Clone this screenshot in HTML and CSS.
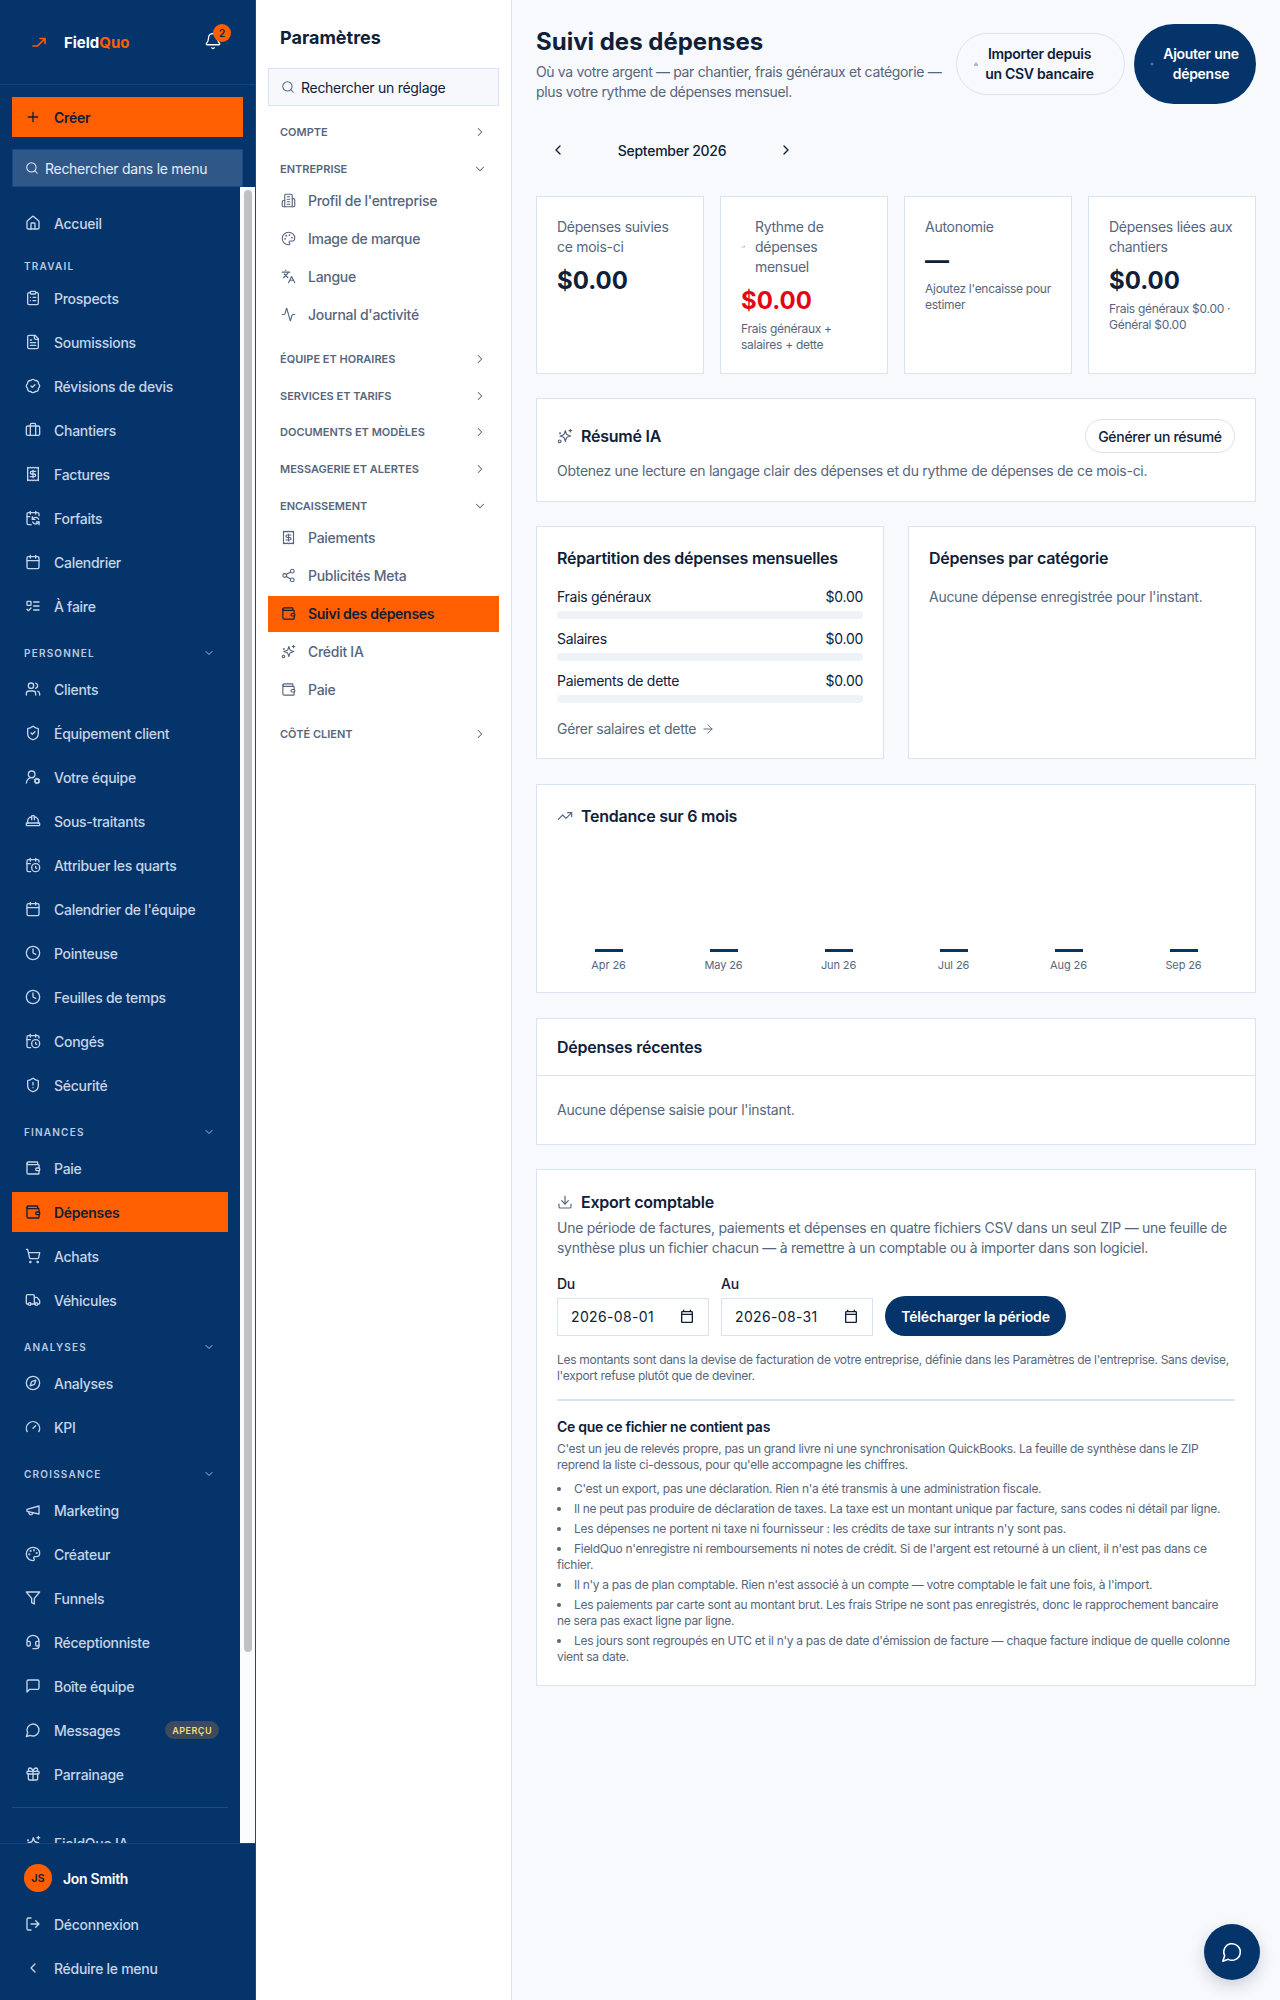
FILE: index.html
```html
<!DOCTYPE html>
<html lang="fr">
<head>
<meta charset="utf-8">
<title>Suivi des dépenses</title>
<link rel="stylesheet" href="styles.css">
</head>
<body>
<svg class="sprite" aria-hidden="true">
<symbol id="house" viewBox="0 0 24 24"><path d="M15 21v-8a1 1 0 0 0-1-1h-4a1 1 0 0 0-1 1v8"/><path d="M3 10a2 2 0 0 1 .709-1.528l7-5.999a2 2 0 0 1 2.582 0l7 5.999A2 2 0 0 1 21 10v9a2 2 0 0 1-2 2H5a2 2 0 0 1-2-2z"/></symbol>
<symbol id="clip" viewBox="0 0 24 24"><rect x="8" y="2" width="8" height="4" rx="1"/><path d="M16 4h2a2 2 0 0 1 2 2v14a2 2 0 0 1-2 2H6a2 2 0 0 1-2-2V6a2 2 0 0 1 2-2h2"/><path d="M12 11h4M12 16h4M8 11h.01M8 16h.01"/></symbol>
<symbol id="file" viewBox="0 0 24 24"><path d="M15 2H6a2 2 0 0 0-2 2v16a2 2 0 0 0 2 2h12a2 2 0 0 0 2-2V7Z"/><path d="M14 2v4a2 2 0 0 0 2 2h4"/><path d="M10 9H8M16 13H8M16 17H8"/></symbol>
<symbol id="badge" viewBox="0 0 24 24"><path d="M3.85 8.62a4 4 0 0 1 4.78-4.77 4 4 0 0 1 6.74 0 4 4 0 0 1 4.78 4.78 4 4 0 0 1 0 6.74 4 4 0 0 1-4.77 4.78 4 4 0 0 1-6.75 0 4 4 0 0 1-4.78-4.77 4 4 0 0 1 0-6.76Z"/><path d="m9 12 2 2 4-4"/></symbol>
<symbol id="brief" viewBox="0 0 24 24"><path d="M16 20V4a2 2 0 0 0-2-2h-4a2 2 0 0 0-2 2v16"/><rect x="2" y="6" width="20" height="14" rx="2"/></symbol>
<symbol id="receipt" viewBox="0 0 24 24"><path d="M4 2v20l2-1 2 1 2-1 2 1 2-1 2 1 2-1 2 1V2l-2 1-2-1-2 1-2-1-2 1-2-1-2 1Z"/><path d="M16 8h-6a2 2 0 1 0 0 4h4a2 2 0 1 1 0 4H8"/><path d="M12 17.5v-11"/></symbol>
<symbol id="calsync" viewBox="0 0 24 24"><path d="M11 10v4h4"/><path d="m11 14 1.535-1.605a5 5 0 0 1 8 1.5"/><path d="M16 2v4"/><path d="m21 18-1.535 1.605a5 5 0 0 1-8-1.5"/><path d="M21 22v-4h-4"/><path d="M21 8.5V6a2 2 0 0 0-2-2H5a2 2 0 0 0-2 2v14a2 2 0 0 0 2 2h4.3"/><path d="M3 10h4"/><path d="M8 2v4"/></symbol>
<symbol id="cal" viewBox="0 0 24 24"><path d="M8 2v4M16 2v4"/><rect x="3" y="4" width="18" height="18" rx="2"/><path d="M3 10h18"/></symbol>
<symbol id="calnative" viewBox="0 0 24 24"><path d="M19 3h-1V1h-2v2H8V1H6v2H5c-1.11 0-2 .9-2 2v14c0 1.1.89 2 2 2h14c1.1 0 2-.9 2-2V5c0-1.1-.9-2-2-2zm0 16H5V9h14v10zm0-12H5V5h14v2z"/></symbol>
<symbol id="todo" viewBox="0 0 24 24"><rect x="3" y="5" width="6" height="6" rx="1"/><path d="m3 17 2 2 4-4M13 6h8M13 12h8M13 18h8"/></symbol>
<symbol id="users" viewBox="0 0 24 24"><path d="M16 21v-2a4 4 0 0 0-4-4H6a4 4 0 0 0-4 4v2"/><circle cx="9" cy="7" r="4"/><path d="M22 21v-2a4 4 0 0 0-3-3.87M16 3.13a4 4 0 0 1 0 7.75"/></symbol>
<symbol id="shcheck" viewBox="0 0 24 24"><path d="M20 13c0 5-3.5 7.5-7.66 8.95a1 1 0 0 1-.67-.01C7.5 20.5 4 18 4 13V6a1 1 0 0 1 1-1c2 0 4.5-1.2 6.24-2.72a1.17 1.17 0 0 1 1.52 0C14.51 3.81 17 5 19 5a1 1 0 0 1 1 1z"/><path d="m9 12 2 2 4-4"/></symbol>
<symbol id="usercog" viewBox="0 0 24 24"><path d="M2 21a8 8 0 0 1 10.434-7.62"/><circle cx="10" cy="8" r="5"/><circle cx="18" cy="18" r="3"/><path d="m19.5 14.3-.4.9m-2.2 5.6-.4.9m5.2-2.2-.9-.4m-5.6-2.6-.9-.4m7.4 0-.9.4m-5.6 2.2-.9.4m5.2 2.2-.4-.9m-2.2-5.6-.4-.9"/></symbol>
<symbol id="hat" viewBox="0 0 24 24"><path d="M10 10V5a1 1 0 0 1 1-1h2a1 1 0 0 1 1 1v5"/><path d="M14 6a6 6 0 0 1 6 6v3"/><path d="M4 15v-3a6 6 0 0 1 6-6"/><rect x="2" y="15" width="20" height="4" rx="1"/></symbol>
<symbol id="calclock" viewBox="0 0 24 24"><path d="M16 14v2.2l1.6 1"/><path d="M16 2v4"/><path d="M21 7.5V6a2 2 0 0 0-2-2H5a2 2 0 0 0-2 2v14a2 2 0 0 0 2 2h3.5"/><path d="M3 10h5"/><path d="M8 2v4"/><circle cx="16" cy="16" r="6"/></symbol>
<symbol id="clock" viewBox="0 0 24 24"><circle cx="12" cy="12" r="10"/><path d="M12 6v6l4 2"/></symbol>
<symbol id="shalert" viewBox="0 0 24 24"><path d="M20 13c0 5-3.5 7.5-7.66 8.95a1 1 0 0 1-.67-.01C7.5 20.5 4 18 4 13V6a1 1 0 0 1 1-1c2 0 4.5-1.2 6.24-2.72a1.17 1.17 0 0 1 1.52 0C14.51 3.81 17 5 19 5a1 1 0 0 1 1 1z"/><path d="M12 8v4M12 16h.01"/></symbol>
<symbol id="wallet" viewBox="0 0 24 24"><path d="M19 7V4a1 1 0 0 0-1-1H5a2 2 0 0 0 0 4h15a1 1 0 0 1 1 1v4h-3a2 2 0 0 0 0 4h3a1 1 0 0 0 1-1v-2a1 1 0 0 0-1-1"/><path d="M3 5v14a2 2 0 0 0 2 2h15a1 1 0 0 0 1-1v-4"/></symbol>
<symbol id="cart" viewBox="0 0 24 24"><circle cx="8" cy="21" r="1"/><circle cx="19" cy="21" r="1"/><path d="M2.05 2.05h2l2.66 12.42a2 2 0 0 0 2 1.58h9.78a2 2 0 0 0 1.95-1.57l1.65-7.43H5.12"/></symbol>
<symbol id="truck" viewBox="0 0 24 24"><path d="M14 18V6a2 2 0 0 0-2-2H4a2 2 0 0 0-2 2v11a1 1 0 0 0 1 1h2"/><path d="M15 18H9"/><path d="M19 18h2a1 1 0 0 0 1-1v-3.65a1 1 0 0 0-.22-.624l-3.48-4.35A1 1 0 0 0 17.52 8H14"/><circle cx="17" cy="18" r="2"/><circle cx="7" cy="18" r="2"/></symbol>
<symbol id="compass" viewBox="0 0 24 24"><circle cx="12" cy="12" r="10"/><path d="m16.24 7.76-1.804 5.411a2 2 0 0 1-1.265 1.265L7.76 16.24l1.804-5.411a2 2 0 0 1 1.265-1.265z"/></symbol>
<symbol id="gauge" viewBox="0 0 24 24"><path d="m12 14 4-4"/><path d="M3.34 19a10 10 0 1 1 17.32 0"/></symbol>
<symbol id="mega" viewBox="0 0 24 24"><path d="m3 11 18-5v12L3 14v-3z"/><path d="M11.6 16.8a3 3 0 1 1-5.8-1.6"/></symbol>
<symbol id="palette" viewBox="0 0 24 24"><path d="M12 22a1 1 0 0 1 0-20 10 9 0 0 1 10 9 5 5 0 0 1-5 5h-2.25a1.75 1.75 0 0 0-1.4 2.8l.3.4a1.75 1.75 0 0 1-1.4 2.8z"/><circle cx="13.5" cy="6.5" r=".6"/><circle cx="17.5" cy="10.5" r=".6"/><circle cx="6.5" cy="12.5" r=".6"/><circle cx="8.5" cy="7.5" r=".6"/></symbol>
<symbol id="funnel" viewBox="0 0 24 24"><path d="M22 3H2l8 9.46V19l4 2v-8.54z"/></symbol>
<symbol id="headset" viewBox="0 0 24 24"><path d="M3 11h3a2 2 0 0 1 2 2v3a2 2 0 0 1-2 2H5a2 2 0 0 1-2-2v-5Zm0 0a9 9 0 1 1 18 0m0 0v5a2 2 0 0 1-2 2h-1a2 2 0 0 1-2-2v-3a2 2 0 0 1 2-2h3Z"/><path d="M21 16v2a4 4 0 0 1-4 4h-5"/></symbol>
<symbol id="msgsq" viewBox="0 0 24 24"><path d="M21 15a2 2 0 0 1-2 2H7l-4 4V5a2 2 0 0 1 2-2h14a2 2 0 0 1 2 2z"/></symbol>
<symbol id="msgcir" viewBox="0 0 24 24"><path d="M7.9 20A9 9 0 1 0 4 16.1L2 22Z"/></symbol>
<symbol id="gift" viewBox="0 0 24 24"><rect x="3" y="8" width="18" height="4" rx="1"/><path d="M12 8v13"/><path d="M19 12v7a2 2 0 0 1-2 2H7a2 2 0 0 1-2-2v-7"/><path d="M7.5 8a2.5 2.5 0 0 1 0-5A4.8 8 0 0 1 12 8a4.8 8 0 0 1 4.5-5 2.5 2.5 0 0 1 0 5"/></symbol>
<symbol id="spark" viewBox="0 0 24 24"><path d="M12.5 4l1.5 4.6a3 3 0 0 0 1.9 1.9l4.6 1.5-4.6 1.5a3 3 0 0 0-1.9 1.9L12.5 20 11 15.4a3 3 0 0 0-1.9-1.9L4.5 12l4.6-1.5A3 3 0 0 0 11 8.600z"/><path d="M20 2v4M18 4h4"/><circle cx="4" cy="20" r="2"/><circle cx="4.500" cy="8" r=".6"/></symbol>
<symbol id="logout" viewBox="0 0 24 24"><path d="M9 21H5a2 2 0 0 1-2-2V5a2 2 0 0 1 2-2h4"/><path d="m16 17 5-5-5-5M21 12H9"/></symbol>
<symbol id="left" viewBox="0 0 24 24"><path d="m15 18-6-6 6-6"/></symbol>
<symbol id="right" viewBox="0 0 24 24"><path d="m9 18 6-6-6-6"/></symbol>
<symbol id="down" viewBox="0 0 24 24"><path d="m6 9 6 6 6-6"/></symbol>
<symbol id="search" viewBox="0 0 24 24"><circle cx="11" cy="11" r="8"/><path d="m21 21-4.3-4.3"/></symbol>
<symbol id="bell" viewBox="0 0 24 24"><path d="M10.268 21a2 2 0 0 0 3.464 0"/><path d="M3.262 15.326A1 1 0 0 0 4 17h16a1 1 0 0 0 .74-1.673C19.41 13.956 18 12.499 18 8A6 6 0 0 0 6 8c0 4.499-1.411 5.956-2.738 7.326"/></symbol>
<symbol id="plus" viewBox="0 0 24 24"><path d="M5 12h14M12 5v14"/></symbol>
<symbol id="build" viewBox="0 0 24 24"><path d="M6 22V4a2 2 0 0 1 2-2h8a2 2 0 0 1 2 2v18Z"/><path d="M6 12H4a2 2 0 0 0-2 2v6a2 2 0 0 0 2 2h2"/><path d="M18 9h2a2 2 0 0 1 2 2v9a2 2 0 0 1-2 2h-2"/><path d="M10 6h4M10 10h4M10 14h4M10 18h4"/></symbol>
<symbol id="lang" viewBox="0 0 24 24"><path d="m5 8 6 6M4 14l6-6 2-3M2 5h12M7 2h1M22 22l-5-10-5 10M14 18h6"/></symbol>
<symbol id="activity" viewBox="0 0 24 24"><path d="M22 12h-2.48a2 2 0 0 0-1.93 1.46l-2.35 8.36a.25.25 0 0 1-.48 0L9.24 2.18a.25.25 0 0 0-.48 0l-2.35 8.36A2 2 0 0 1 4.49 12H2"/></symbol>
<symbol id="share" viewBox="0 0 24 24"><circle cx="18" cy="5" r="3"/><circle cx="6" cy="12" r="3"/><circle cx="18" cy="19" r="3"/><path d="M8.59 13.51l6.83 3.98M15.41 6.51l-6.82 3.98"/></symbol>
<symbol id="trend" viewBox="0 0 24 24"><path d="M16 7h6v6"/><path d="m22 7-8.5 8.5-5-5L2 17"/></symbol>
<symbol id="logo" viewBox="0 0 14 10"><path d="M1 9h4.500L12.500 2"/><path d="M8 1.500h5v5"/></symbol>
<symbol id="download" viewBox="0 0 24 24"><path d="M12 15V3"/><path d="M21 15v4a2 2 0 0 1-2 2H5a2 2 0 0 1-2-2v-4"/><path d="m7 10 5 5 5-5"/></symbol>
<symbol id="arrow" viewBox="0 0 24 24"><path d="M5 12h14M12 5l7 7-7 7"/></symbol>
</svg>

<div class="app">
  <aside class="side">
    <div class="brand">
      <svg class="brand-mark"><use href="#logo"/></svg>
      <span class="brand-name">Field<span class="brand-accent">Quo</span></span>
      <span class="bell"><svg class="ic ic-bell"><use href="#bell"/></svg><span class="bell-count">2</span></span>
    </div>
    <a class="create"><svg class="ic ic-plus"><use href="#plus"/></svg>Créer</a>
    <div class="side-search"><svg class="ic ic-search"><use href="#search"/></svg>Rechercher dans le menu</div>
    <div class="nav-wrap">
    <nav class="nav">
      <a class="item"><svg class="ic"><use href="#house"/></svg>Accueil</a>
      <div class="sec sec-first">Travail</div>
      <a class="item"><svg class="ic"><use href="#clip"/></svg>Prospects</a>
      <a class="item"><svg class="ic"><use href="#file"/></svg>Soumissions</a>
      <a class="item"><svg class="ic"><use href="#badge"/></svg>Révisions de devis</a>
      <a class="item"><svg class="ic"><use href="#brief"/></svg>Chantiers</a>
      <a class="item"><svg class="ic"><use href="#receipt"/></svg>Factures</a>
      <a class="item"><svg class="ic"><use href="#calsync"/></svg>Forfaits</a>
      <a class="item"><svg class="ic"><use href="#cal"/></svg>Calendrier</a>
      <a class="item"><svg class="ic"><use href="#todo"/></svg>À faire</a>
      <div class="sec">Personnel<svg class="ic ic-sec"><use href="#down"/></svg></div>
      <a class="item"><svg class="ic"><use href="#users"/></svg>Clients</a>
      <a class="item"><svg class="ic"><use href="#shcheck"/></svg>Équipement client</a>
      <a class="item"><svg class="ic"><use href="#usercog"/></svg>Votre équipe</a>
      <a class="item"><svg class="ic"><use href="#hat"/></svg>Sous-traitants</a>
      <a class="item"><svg class="ic"><use href="#calclock"/></svg>Attribuer les quarts</a>
      <a class="item"><svg class="ic"><use href="#cal"/></svg>Calendrier de l'équipe</a>
      <a class="item"><svg class="ic"><use href="#clock"/></svg>Pointeuse</a>
      <a class="item"><svg class="ic"><use href="#clock"/></svg>Feuilles de temps</a>
      <a class="item"><svg class="ic"><use href="#calclock"/></svg>Congés</a>
      <a class="item"><svg class="ic"><use href="#shalert"/></svg>Sécurité</a>
      <div class="sec">Finances<svg class="ic ic-sec"><use href="#down"/></svg></div>
      <a class="item"><svg class="ic"><use href="#wallet"/></svg>Paie</a>
      <a class="item item-on"><svg class="ic"><use href="#wallet"/></svg>Dépenses</a>
      <a class="item"><svg class="ic"><use href="#cart"/></svg>Achats</a>
      <a class="item"><svg class="ic"><use href="#truck"/></svg>Véhicules</a>
      <div class="sec">Analyses<svg class="ic ic-sec"><use href="#down"/></svg></div>
      <a class="item"><svg class="ic"><use href="#compass"/></svg>Analyses</a>
      <a class="item"><svg class="ic"><use href="#gauge"/></svg>KPI</a>
      <div class="sec">Croissance<svg class="ic ic-sec"><use href="#down"/></svg></div>
      <a class="item"><svg class="ic"><use href="#mega"/></svg>Marketing</a>
      <a class="item"><svg class="ic"><use href="#palette"/></svg>Créateur</a>
      <a class="item"><svg class="ic"><use href="#funnel"/></svg>Funnels</a>
      <a class="item"><svg class="ic"><use href="#headset"/></svg>Réceptionniste</a>
      <a class="item"><svg class="ic"><use href="#msgsq"/></svg>Boîte équipe</a>
      <a class="item"><svg class="ic"><use href="#msgcir"/></svg>Messages<span class="tag">APERÇU</span></a>
      <a class="item"><svg class="ic"><use href="#gift"/></svg>Parrainage</a>
      <div class="nav-rule"></div>
      <a class="item"><svg class="ic"><use href="#spark"/></svg>FieldQuo IA</a>
    </nav>
    <div class="gutter"><div class="thumb"></div></div>
    </div>
    <div class="side-foot">
      <div class="user"><span class="avatar">JS</span>Jon Smith</div>
      <a class="item"><svg class="ic"><use href="#logout"/></svg>Déconnexion</a>
      <a class="item"><svg class="ic"><use href="#left"/></svg>Réduire le menu</a>
    </div>
  </aside>

  <section class="panel">
    <h2 class="panel-title">Paramètres</h2>
    <div class="panel-search"><svg class="ic ic-search"><use href="#search"/></svg>Rechercher un réglage</div>
    <div class="group"><div class="glabel">Compte<svg class="ic ic-g"><use href="#right"/></svg></div></div>
    <div class="group group-open">
      <div class="glabel">Entreprise<svg class="ic ic-g"><use href="#down"/></svg></div>
      <a class="pitem"><svg class="ic"><use href="#build"/></svg>Profil de l'entreprise</a>
      <a class="pitem"><svg class="ic"><use href="#palette"/></svg>Image de marque</a>
      <a class="pitem"><svg class="ic"><use href="#lang"/></svg>Langue</a>
      <a class="pitem"><svg class="ic"><use href="#activity"/></svg>Journal d'activité</a>
    </div>
    <div class="group"><div class="glabel">Équipe et horaires<svg class="ic ic-g"><use href="#right"/></svg></div></div>
    <div class="group"><div class="glabel">Services et tarifs<svg class="ic ic-g"><use href="#right"/></svg></div></div>
    <div class="group"><div class="glabel">Documents et modèles<svg class="ic ic-g"><use href="#right"/></svg></div></div>
    <div class="group"><div class="glabel">Messagerie et alertes<svg class="ic ic-g"><use href="#right"/></svg></div></div>
    <div class="group group-open">
      <div class="glabel">Encaissement<svg class="ic ic-g"><use href="#down"/></svg></div>
      <a class="pitem"><svg class="ic"><use href="#receipt"/></svg>Paiements</a>
      <a class="pitem"><svg class="ic"><use href="#share"/></svg>Publicités Meta</a>
      <a class="pitem pitem-on"><svg class="ic"><use href="#wallet"/></svg>Suivi des dépenses</a>
      <a class="pitem"><svg class="ic"><use href="#spark"/></svg>Crédit IA</a>
      <a class="pitem"><svg class="ic"><use href="#wallet"/></svg>Paie</a>
    </div>
    <div class="group"><div class="glabel">Côté client<svg class="ic ic-g"><use href="#right"/></svg></div></div>
  </section>

  <main class="main">
    <header class="top">
      <div class="top-text">
        <h1>Suivi des dépenses</h1>
        <p>Où va votre argent — par chantier, frais généraux et catégorie — plus votre rythme de dépenses mensuel.</p>
      </div>
      <button class="btn btn-import"><svg class="ic ic-tiny"><use href="#download"/></svg><span>Importer depuis un CSV bancaire</span></button>
      <button class="btn btn-add"><svg class="ic ic-tiny"><use href="#plus"/></svg><span>Ajouter une dépense</span></button>
    </header>

    <div class="month">
      <span class="month-btn"><svg class="ic"><use href="#left"/></svg></span>
      <span class="month-name">September 2026</span>
      <span class="month-btn"><svg class="ic"><use href="#right"/></svg></span>
    </div>

    <div class="stats">
      <div class="card stat">
        <div class="stat-label">Dépenses suivies ce mois-ci</div>
        <div class="stat-value">$0.00</div>
      </div>
      <div class="card stat">
        <div class="stat-label stat-label-ic"><svg class="ic ic-tiny"><use href="#trend"/></svg><span>Rythme de dépenses mensuel</span></div>
        <div class="stat-value stat-red">$0.00</div>
        <div class="stat-note">Frais généraux + salaires + dette</div>
      </div>
      <div class="card stat">
        <div class="stat-label">Autonomie</div>
        <div class="stat-value">—</div>
        <div class="stat-note">Ajoutez l'encaisse pour estimer</div>
      </div>
      <div class="card stat">
        <div class="stat-label">Dépenses liées aux chantiers</div>
        <div class="stat-value">$0.00</div>
        <div class="stat-note">Frais généraux $0.00 · Général $0.00</div>
      </div>
    </div>

    <div class="card pad ai">
      <div class="ai-head">
        <h3 class="h-ic"><svg class="ic"><use href="#spark"/></svg>Résumé IA</h3>
        <button class="btn-outline">Générer un résumé</button>
      </div>
      <p class="muted">Obtenez une lecture en langage clair des dépenses et du rythme de dépenses de ce mois-ci.</p>
    </div>

    <div class="cols">
      <div class="card pad">
        <h3 class="col-title">Répartition des dépenses mensuelles</h3>
        <div class="row"><span>Frais généraux</span><span>$0.00</span></div>
        <div class="track"></div>
        <div class="row"><span>Salaires</span><span>$0.00</span></div>
        <div class="track"></div>
        <div class="row"><span>Paiements de dette</span><span>$0.00</span></div>
        <div class="track"></div>
        <a class="manage">Gérer salaires et dette<svg class="ic ic-arrow"><use href="#arrow"/></svg></a>
      </div>
      <div class="card pad">
        <h3 class="col-title">Dépenses par catégorie</h3>
        <p class="muted">Aucune dépense enregistrée pour l'instant.</p>
      </div>
    </div>

    <div class="card pad trend">
      <h3 class="h-ic"><svg class="ic"><use href="#trend"/></svg>Tendance sur 6 mois</h3>
      <div class="chart">
        <div class="bar-col"><i class="bar"></i><span>Apr 26</span></div>
        <div class="bar-col"><i class="bar"></i><span>May 26</span></div>
        <div class="bar-col"><i class="bar"></i><span>Jun 26</span></div>
        <div class="bar-col"><i class="bar"></i><span>Jul 26</span></div>
        <div class="bar-col"><i class="bar"></i><span>Aug 26</span></div>
        <div class="bar-col"><i class="bar"></i><span>Sep 26</span></div>
      </div>
    </div>

    <div class="card recent">
      <div class="recent-head"><h3>Dépenses récentes</h3></div>
      <p class="muted recent-body">Aucune dépense saisie pour l'instant.</p>
    </div>

    <div class="card pad export">
      <h3 class="h-ic export-title"><svg class="ic"><use href="#download"/></svg>Export comptable</h3>
      <p class="muted">Une période de factures, paiements et dépenses en quatre fichiers CSV dans un seul ZIP — une feuille de synthèse plus un fichier chacun — à remettre à un comptable ou à importer dans son logiciel.</p>
      <div class="form">
        <label class="field"><span>Du</span><span class="date">2026-08-01<svg class="ic ic-date"><use href="#calnative"/></svg></span></label>
        <label class="field"><span>Au</span><span class="date">2026-08-31<svg class="ic ic-date"><use href="#calnative"/></svg></span></label>
        <button class="btn-dl">Télécharger la période</button>
      </div>
      <p class="note">Les montants sont dans la devise de facturation de votre entreprise, définie dans les Paramètres de l'entreprise. Sans devise, l'export refuse plutôt que de deviner.</p>
      <hr class="rule">
      <h4>Ce que ce fichier ne contient pas</h4>
      <p class="note note-intro">C'est un jeu de relevés propre, pas un grand livre ni une synchronisation QuickBooks. La feuille de synthèse dans le ZIP reprend la liste ci-dessous, pour qu'elle accompagne les chiffres.</p>
      <ul class="list">
        <li>C'est un export, pas une déclaration. Rien n'a été transmis à une administration fiscale.</li>
        <li>Il ne peut pas produire de déclaration de taxes. La taxe est un montant unique par facture, sans codes ni détail par ligne.</li>
        <li>Les dépenses ne portent ni taxe ni fournisseur : les crédits de taxe sur intrants n'y sont pas.</li>
        <li>FieldQuo n'enregistre ni remboursements ni notes de crédit. Si de l'argent est retourné à un client, il n'est pas dans ce fichier.</li>
        <li>Il n'y a pas de plan comptable. Rien n'est associé à un compte — votre comptable le fait une fois, à l'import.</li>
        <li>Les paiements par carte sont au montant brut. Les frais Stripe ne sont pas enregistrés, donc le rapprochement bancaire ne sera pas exact ligne par ligne.</li>
        <li>Les jours sont regroupés en UTC et il n'y a pas de date d'émission de facture — chaque facture indique de quelle colonne vient sa date.</li>
      </ul>
    </div>
  </main>
</div>
<button class="fab" aria-label="Messages"><svg class="ic ic-fab"><use href="#msgcir"/></svg></button>
</body>
</html>
```

FILE: styles.css
```css
* { box-sizing: border-box; }
html, body { margin: 0; padding: 0; height: 100%; }
body { font-family: Inter, "Liberation Sans", sans-serif; font-size: 14px; letter-spacing: -0.02em; color: #0f2038; background: #f7f9fc; overflow: hidden; }
.sprite { display: none; }
h1, h2, h3, h4, p { margin: 0; }
button { font-family: inherit; letter-spacing: inherit; cursor: pointer; }
.ic { width: 16px; height: 16px; flex: none; fill: none; stroke: currentColor; stroke-width: 2; stroke-linecap: round; stroke-linejoin: round; }

.app { display: flex; height: 2000px; }

/* Sidebar */
.side { width: 256px; flex: none; height: 2000px; background: #05346b; border-right: 1px solid #164a8a; display: flex; flex-direction: column; color: #c6d5e8; }
.brand { height: 85px; flex: none; border-bottom: 1px solid #134480; display: flex; align-items: center; padding-left: 32px; position: relative; }
.brand-mark { width: 14px; height: 10px; fill: none; stroke: #ff5f00; stroke-width: 1.6; stroke-linecap: round; stroke-linejoin: round; }
.brand-name { margin-left: 18px; font-weight: 700; font-size: 15px; letter-spacing: 0; color: #fff; }
.brand-accent { color: #ff5f00; }
.bell { position: absolute; left: 204px; top: 32px; width: 18px; height: 20px; color: #fff; }
.ic-bell { width: 18px; height: 18px; stroke-width: 1.7; }
.bell-count { position: absolute; left: 9px; top: -8px; width: 18px; height: 18px; border-radius: 50%; background: #ff5f00; color: #0f2038; font-size: 10px; font-weight: 600; display: flex; align-items: center; justify-content: center; }
.create { margin: 12px; height: 40px; flex: none; background: #ff5f00; color: #0f2038; font-weight: 600; display: flex; align-items: center; gap: 13px; padding-left: 13px; }
.ic-plus { width: 16px; height: 16px; stroke-width: 2; }
.side-search { margin: 0 12px; height: 38px; flex: none; background: #2f5788; border: 1px solid #164a8a; color: #e6edf6; display: flex; align-items: center; gap: 6px; padding-left: 12px; }
.ic-search { width: 14px; height: 14px; stroke-width: 1.8; }
.nav-wrap { flex: 1; min-height: 0; display: flex; }
.nav { flex: 1; min-width: 0; overflow: hidden; padding-top: 16px; }
.gutter { width: 15px; flex: none; background: #fbfcfd; padding: 3px 3px 0 4px; }
.thumb { height: 1462px; background: #c1c1c1; border-radius: 4px; }
.item { height: 40px; margin: 0 12px 4px; padding: 0 9px 0 13px; display: flex; align-items: center; gap: 13px; font-weight: 500; font-size: 14px; color: #c6d5e8; }
.item-on { background: #ff5f00; color: #0f2038; font-weight: 600; }
.sec { margin: 19px 0 8px; height: 16px; padding: 0 24px; display: flex; align-items: center; justify-content: space-between; font-size: 10px; font-weight: 600; letter-spacing: .12em; text-transform: uppercase; color: #b9cbe0; }
.sec-first { margin: 15px 0 4px; }
.ic-sec { width: 12px; height: 12px; margin-right: 1px; stroke-width: 1.8; }
.tag { margin-left: auto; height: 18px; padding: 0 7px; border-radius: 9px; background: #3d4a5b; color: #f6dc7a; font-size: 9px; font-weight: 600; letter-spacing: .05em; display: flex; align-items: center; }
.nav-rule { height: 1px; margin: 13px 12px 15px; background: #174c8c; }
.side-foot { height: 157px; flex: none; background: #05346b; border-top: 1px solid #134480; padding-top: 14px; }
.user { height: 40px; margin: 0 0 6px; padding-left: 24px; display: flex; align-items: center; gap: 11px; font-weight: 600; color: #fff; }
.avatar { width: 28px; height: 28px; border-radius: 50%; background: #ff5f00; color: #0f2038; font-size: 11px; font-weight: 600; letter-spacing: 0; display: flex; align-items: center; justify-content: center; }

/* Settings panel */
.panel { width: 256px; flex: none; background: #fff; border-right: 1px solid #dbe5f1; padding: 0 12px; }
.panel-title { height: 68px; padding: 24px 12px 0; font-size: 18px; line-height: 28px; font-weight: 700; letter-spacing: 0; color: #0f2038; }
.panel-search { height: 38px; margin-bottom: 12px; background: #f6f8fc; border: 1px solid #d8e4f2; display: flex; align-items: center; gap: 6px; padding-left: 12px; color: #0f2038; }
.panel-search .ic-search { color: #56667e; }
.group { margin-bottom: 8.6px; }
.group-open { padding-bottom: 4px; }
.glabel { height: 28px; padding: 0 13px 0 12px; display: flex; align-items: center; justify-content: space-between; font-size: 11px; font-weight: 600; letter-spacing: 0; text-transform: uppercase; color: #56667e; }
.ic-g { width: 14px; height: 14px; margin-right: -1px; stroke-width: 1.8; }
.pitem { height: 36px; margin-bottom: 2px; padding-left: 13px; display: flex; align-items: center; gap: 12px; font-weight: 500; color: #56667e; }
.pitem:last-child { margin-bottom: 0; }
.pitem .ic { width: 15px; height: 15px; stroke-width: 1.8; }
.pitem-on { background: #ff5f00; color: #0f2038; font-weight: 600; }

/* Main */
.main { flex: 1; min-width: 0; padding: 24px 24px 0; background: #f7f9fc; }
.top { display: flex; align-items: center; height: 80px; gap: 9px; }
.top-text { flex: 1; }
.top-text h1 { font-size: 24px; line-height: 32px; font-weight: 700; letter-spacing: 0; margin-bottom: 4px; }
.top-text p { color: #56667e; line-height: 20px; letter-spacing: -0.025em; }
.btn { border-radius: 40px; display: flex; align-items: center; font-size: 14px; line-height: 20px; font-weight: 600; text-align: center; padding: 0; flex: none; }
.btn span { flex: 1; }
.ic-tiny { width: 4px; height: 4px; stroke-width: 2; }
.btn-import { width: 169px; height: 62px; background: transparent; border: 1px solid #d8e4f2; color: #0f2038; padding: 0 23px 0 17px; border-radius: 31px; }
.btn-add { width: 122px; height: 80px; background: #05346b; border: 0; color: #fff; padding: 0 8px 0 16px; }
.month { margin: 26px 0; height: 40px; display: flex; align-items: center; }
.month-btn { width: 44px; display: flex; justify-content: center; }
.month-name { width: 184px; text-align: center; font-weight: 500; }

.card { background: #fff; border: 1px solid #d8e4f2; }
.pad { padding: 20px; }
.stats { display: grid; grid-template-columns: repeat(4, 1fr); gap: 16px; margin-bottom: 24px; }
.stat { height: 178px; padding: 20px; }
.stat-label { color: #56667e; line-height: 20px; }
.stat-label-ic { display: flex; align-items: center; gap: 10px; }
.stat-value { margin-top: 8px; font-size: 24px; line-height: 32px; font-weight: 700; letter-spacing: 0; }
.stat-red { color: #e30613; }
.stat-note { margin-top: 4px; font-size: 12px; line-height: 16px; color: #56667e; }
.muted { color: #56667e; line-height: 20px; }

.ai { margin-bottom: 24px; height: 104px; }
.ai-head { display: flex; justify-content: space-between; align-items: center; height: 34px; margin-bottom: 8px; }
.h-ic { display: flex; align-items: center; gap: 8px; font-size: 16px; line-height: 22px; font-weight: 600; letter-spacing: -0.015em; }
.h-ic .ic { color: #56667e; stroke-width: 1.8; }
.btn-outline { height: 34px; width: 150px; border-radius: 17px; background: #fff; border: 1px solid #d8e4f2; color: #0f2038; font-size: 14px; font-weight: 500; padding: 0; }

.cols { display: grid; grid-template-columns: 1fr 1fr; gap: 24px; margin-bottom: 25px; }
.cols .card { height: 233px; }
.col-title { font-size: 16px; line-height: 22px; font-weight: 600; letter-spacing: -0.015em; margin-bottom: 18px; }
.row { display: flex; justify-content: space-between; line-height: 20px; color: #0f2038; margin-bottom: 4px; }
.track { height: 8px; border-radius: 4px; background: #eff2f7; margin-bottom: 10px; }
.manage { display: flex; align-items: center; gap: 5px; margin-top: 16px; line-height: 20px; color: #56667e; }
.ic-arrow { width: 14px; height: 14px; stroke-width: 1.6; }

.trend { height: 209px; margin-bottom: 25px; }
.chart { margin-top: 16px; height: 130px; display: grid; grid-template-columns: repeat(6, 1fr); gap: 12px; }
.bar-col { display: flex; flex-direction: column; align-items: center; justify-content: flex-end; font-size: 11px; line-height: 16px; letter-spacing: -0.01em; color: #56667e; }
.bar { display: block; width: 28px; height: 3px; background: #05346b; margin-bottom: 5px; }

.recent { margin-bottom: 24px; }
.recent-head { height: 57px; padding: 0 20px; border-bottom: 1px solid #d8e4f2; display: flex; align-items: center; }
.recent-head h3 { font-size: 16px; line-height: 22px; font-weight: 600; letter-spacing: -0.015em; }
.recent-body { padding: 24px 20px; }

.export { height: 517px; }
.export-title { line-height: 24px; margin-bottom: 4px; }
.form { display: flex; align-items: flex-end; gap: 12px; margin-top: 18px; }
.field { display: flex; flex-direction: column; gap: 6px; font-weight: 500; font-size: 14px; line-height: 16px; color: #0f2038; }
.date { width: 152px; height: 38px; border: 1px solid #d8e4f2; background: #fff; display: flex; align-items: center; justify-content: space-between; padding: 0 13px; font-size: 14px; font-weight: 400; letter-spacing: .35px; }
.ic-date { width: 16px; height: 16px; stroke: none; fill: #0f2038; }
.btn-dl { width: 181px; height: 40px; border: 0; border-radius: 20px; background: #05346b; color: #fff; font-size: 14px; font-weight: 600; letter-spacing: -0.01em; padding: 0; }
.note { font-size: 12px; line-height: 16px; letter-spacing: -0.025em; color: #56667e; margin-top: 16px; }
.rule { height: 2px; border: 0; background: #d8e4f2; margin: 15px 0 16px; }
.export h4 { font-size: 14px; line-height: 20px; font-weight: 600; }
.note-intro { margin-top: 4px; }
.list { margin: 8px 0 0; padding: 0 3px 0 0; list-style: disc inside; font-size: 12px; line-height: 16px; letter-spacing: -0.024em; color: #56667e; }
.list li { margin-bottom: 4px; }
.list li:last-child { margin-bottom: 0; }

.fab { position: fixed; left: 1204px; top: 1924px; width: 56px; height: 56px; border: 0; border-radius: 50%; background: #05346b; color: #fff; display: flex; align-items: center; justify-content: center; box-shadow: 0 6px 16px rgba(15, 32, 56, .18); padding: 0; }
.ic-fab { width: 22px; height: 22px; stroke-width: 1.7; }
```
